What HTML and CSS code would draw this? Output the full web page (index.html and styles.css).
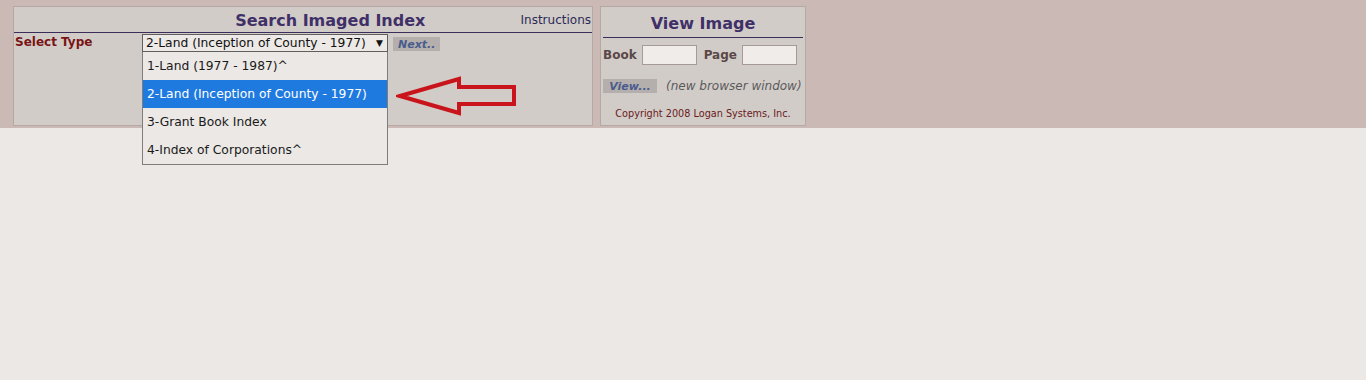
FILE: index.html
```html
<!DOCTYPE html>
<html lang="en">
<head>
    <meta charset="UTF-8">
    <title>Search Imaged Index</title>
    <link rel="stylesheet" href="styles.css">
</head>
<body>
    <div class="band">
        <div class="panel search">
            <div class="head">
                <h2 class="title search-title">Search Imaged Index</h2>
                <a class="instructions">Instructions</a>
            </div>
            <div class="select-row">
                <label class="select-label">Select Type</label>
                <div class="select-wrap">
                    <div class="select-box">
                        <span>2-Land (Inception of County - 1977)</span>
                        <span class="caret">&#9660;</span>
                    </div>
                    <ul class="options">
                        <li>1-Land (1977 - 1987)^</li>
                        <li class="active">2-Land (Inception of County - 1977)</li>
                        <li>3-Grant Book Index</li>
                        <li>4-Index of Corporations^</li>
                    </ul>
                </div>
                <button class="btn">Next..</button>
            </div>
            <svg class="arrow" width="126" height="42" viewBox="0 0 126 42">
                <path d="M4 21 L63 4 L63 12 L118 12 L118 29 L63 29 L63 38 Z" fill="none" stroke="#c8141a" stroke-width="4" stroke-linejoin="miter"/>
            </svg>
        </div>
        <div class="panel view">
            <h2 class="title view-title">View Image</h2>
            <div class="field-row">
                <label>Book</label>
                <input type="text" class="field">
                <label>Page</label>
                <input type="text" class="field">
            </div>
            <div class="view-row">
                <button class="btn">View...</button>
                <span class="note">(new browser window)</span>
            </div>
            <p class="copyright">Copyright 2008 Logan Systems, Inc.</p>
        </div>
    </div>
    <div class="page"></div>
</body>
</html>
```

FILE: styles.css
```css
body {
    margin: 0;
    background-color: #ece8e5;
    font-family: "DejaVu Sans", Verdana, sans-serif;
}
.band {
    position: relative;
    z-index: 1;
    display: flex;
    gap: 7px;
    height: 128px;
    padding: 6px 0 0 13px;
    box-sizing: border-box;
    overflow: visible;
    background-color: #cbb9b5;
}
.page {
    height: 252px;
}
.panel {
    position: relative;
    height: 120px;
    box-sizing: border-box;
    border: 1px solid #b6a8a4;
    background-color: #d2ccc9;
}
.search {
    width: 580px;
}
.view {
    width: 206px;
    padding: 0 2px;
}
.head {
    display: flex;
    align-items: center;
    height: 25px;
    border-bottom: 1px solid #3b2d5a;
}
.title {
    margin: 0;
    font-size: 16px;
    font-weight: bold;
    color: #3f3068;
}
.search-title {
    flex: 1;
    text-align: center;
    padding-left: 126px;
    padding-top: 2px;
}
.instructions {
    font-size: 12px;
    color: #2a2a55;
    padding-right: 1px;
}
.select-row {
    display: flex;
    align-items: flex-start;
    padding-top: 1px;
}
.select-label {
    width: 127px;
    padding-left: 1px;
    padding-top: 1px;
    font-size: 12px;
    font-weight: bold;
    color: #7a1414;
}
.select-wrap {
    position: relative;
    width: 246px;
}
.select-box {
    display: flex;
    justify-content: space-between;
    align-items: center;
    height: 18px;
    padding: 0 4px 0 3px;
    box-sizing: border-box;
    border: 1px solid #5f5f5f;
    background-color: #ece9e6;
    font-size: 12.3px;
    color: #111;
}
.caret {
    font-size: 9px;
}
.options {
    position: absolute;
    top: 18px;
    left: 0;
    z-index: 5;
    width: 246px;
    margin: 0;
    padding: 0;
    box-sizing: border-box;
    list-style: none;
    border: 1px solid #7d7d7d;
    border-top: none;
    background-color: #ebe8e5;
}
.options li {
    height: 28px;
    line-height: 28px;
    padding-left: 4px;
    font-size: 12.3px;
    color: #1a1a1a;
}
.options li.active {
    background-color: #1f7ae0;
    color: #fff;
}
.btn {
    margin: 3px 0 0 5px;
    padding: 0 5px;
    height: 14px;
    border: none;
    background-color: #b4afad;
    font-family: "DejaVu Sans", Verdana, sans-serif;
    font-size: 11px;
    font-weight: bold;
    font-style: italic;
    color: #4a5c8c;
}
.arrow {
    position: absolute;
    left: 382px;
    top: 68px;
}
.view-title {
    text-align: center;
    height: 30px;
    line-height: 34px;
    border-bottom: 1px solid #3b2d5a;
}
.field-row {
    display: flex;
    align-items: center;
    gap: 5px;
    margin-top: 7px;
}
.field-row label {
    font-size: 12px;
    font-weight: bold;
    color: #5a4848;
}
.field-row label + .field + label {
    margin-left: 2px;
}
.field {
    width: 55px;
    height: 20px;
    box-sizing: border-box;
    border: 1px solid #a59a98;
    background-color: #efecea;
}
.view-row {
    display: flex;
    align-items: center;
    gap: 9px;
    margin-top: 14px;
}
.view-row .btn {
    margin: 0;
    width: 54px;
}
.note {
    font-size: 12px;
    font-style: italic;
    color: #5a5a5a;
}
.copyright {
    margin: 15px 0 0;
    text-align: center;
    font-size: 9.7px;
    color: #6a1a1a;
}
```
